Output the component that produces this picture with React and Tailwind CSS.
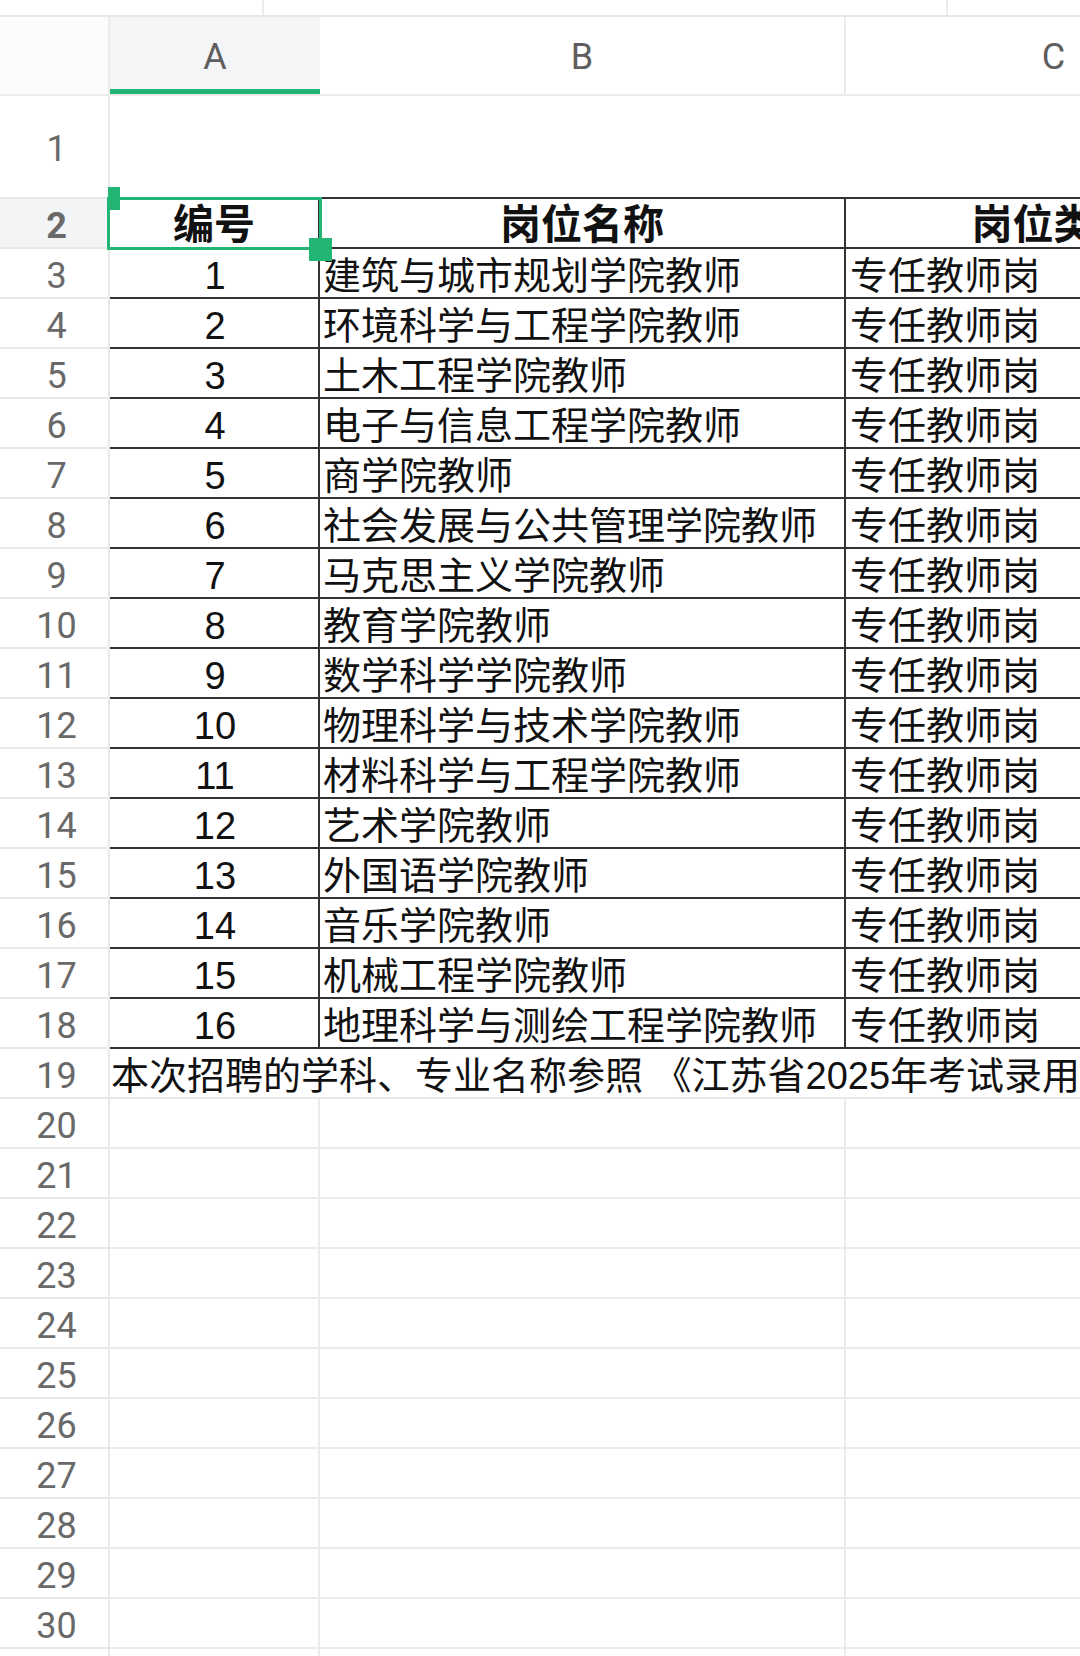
const roles = [
    "建筑与城市规划学院教师",
    "环境科学与工程学院教师",
    "土木工程学院教师",
    "电子与信息工程学院教师",
    "商学院教师",
    "社会发展与公共管理学院教师",
    "马克思主义学院教师",
    "教育学院教师",
    "数学科学学院教师",
    "物理科学与技术学院教师",
    "材料科学与工程学院教师",
    "艺术学院教师",
    "外国语学院教师",
    "音乐学院教师",
    "机械工程学院教师",
    "地理科学与测绘工程学院教师",
]

const emptyRows = [20, 21, 22, 23, 24, 25, 26, 27, 28, 29, 30, 31]

function RowHead({ n, active }) {
    return (
        <div
            className={
                "w-[110px] shrink-0 flex items-center justify-center border-r-2 border-b-2 border-[#e8e8e8] pl-[5px] pt-[5px] font-['Roboto',sans-serif] text-[36px] leading-none text-[#696969] " +
                (active ? "bg-[#f3f4f5]" : "bg-white")
            }
        >
            {n}
        </div>
    )
}

export default function App() {
    return (
        <div className="relative w-[1080px] h-[1656px] overflow-hidden bg-white font-['Liberation_Sans','Noto_Sans_CJK_SC',sans-serif] text-[#111]">
            {/* strip left from the toolbar above */}
            <div className="flex h-[17px] border-b-2 border-[#e8e8e8]">
                <div className="w-[264px] shrink-0 border-r-2 border-[#ececec]" />
                <div className="w-[684px] shrink-0 border-r-2 border-[#ececec]" />
                <div className="flex-1" />
            </div>

            {/* column letters */}
            <div className="flex h-[79px] border-b-2 border-[#ececec] font-['Roboto',sans-serif] text-[36px] text-[#5e5e5e]">
                <div className="w-[110px] shrink-0 border-r-2 border-[#ececec] bg-[#fcfcfc]" />
                <div className="w-[210px] shrink-0 flex items-center justify-center bg-[#f4f5f6] border-b-[5px] border-[#22b573] pt-[8px]">
                    A
                </div>
                <div className="w-[526px] shrink-0 flex items-center justify-center border-r-2 border-[#ececec] pt-[3px]">
                    B
                </div>
                <div className="w-[415px] shrink-0 flex items-center justify-center pt-[3px]">C</div>
            </div>

            {/* row 1: merged title row, empty */}
            <div className="flex h-[103px]">
                <RowHead n={1} />
                <div className="w-[1152px] shrink-0 border-b-2 border-[#333]" />
            </div>

            {/* row 2: table head */}
            <div className="flex h-[50px] text-[41px] font-bold leading-none">
                <RowHead n={2} active />
                <div className="w-[210px] shrink-0 flex items-center justify-center border-r-2 border-b-2 border-[#333] pt-[4px]">
                    编号
                </div>
                <div className="w-[526px] shrink-0 flex items-center justify-center border-r-2 border-b-2 border-[#333] pt-[4px]">
                    岗位名称
                </div>
                <div className="w-[415px] shrink-0 flex items-center justify-center border-b-2 border-[#333] pt-[4px]">
                    岗位类别
                </div>
            </div>

            {roles.map((role, i) => (
                <div key={i} className="flex h-[50px] text-[38px] leading-none">
                    <RowHead n={i + 3} />
                    <div className="w-[210px] shrink-0 flex items-center justify-center border-r-2 border-b-2 border-[#333] pl-[2px] pt-[6px]">
                        {i + 1}
                    </div>
                    <div className="w-[526px] shrink-0 flex items-center border-r-2 border-b-2 border-[#333] pl-[3px] pt-[6px] whitespace-nowrap">
                        {role}
                    </div>
                    <div className="w-[415px] shrink-0 flex items-center border-b-2 border-[#333] pl-[4px] pt-[6px]">
                        专任教师岗
                    </div>
                </div>
            ))}

            {/* row 19: note, merged */}
            <div className="flex h-[50px] text-[38px] leading-none">
                <RowHead n={19} />
                <div className="w-[1152px] shrink-0 flex items-center border-b-2 border-[#e8e8e8] pl-[1px] pt-[6px] whitespace-nowrap">
                    本次招聘的学科、专业名称参照 《江苏省2025年考试录用公务员专业参考目录》
                </div>
            </div>

            {emptyRows.map((n) => (
                <div key={n} className="flex h-[50px]">
                    <RowHead n={n} />
                    <div className="w-[210px] shrink-0 border-r-2 border-b-2 border-[#ececec]" />
                    <div className="w-[526px] shrink-0 border-r-2 border-b-2 border-[#ececec]" />
                    <div className="w-[415px] shrink-0 border-b-2 border-[#ececec]" />
                </div>
            ))}

            {/* selection on A2 */}
            <div className="absolute left-[107px] top-[197px] w-[215px] h-[53px] border-[3px] border-[#22b573]" />
            <div className="absolute left-[108px] top-[187px] w-[12px] h-[23px] bg-[#22b573]" />
            <div className="absolute left-[309px] top-[238px] w-[23px] h-[23px] bg-[#22b573]" />
        </div>
    )
}
